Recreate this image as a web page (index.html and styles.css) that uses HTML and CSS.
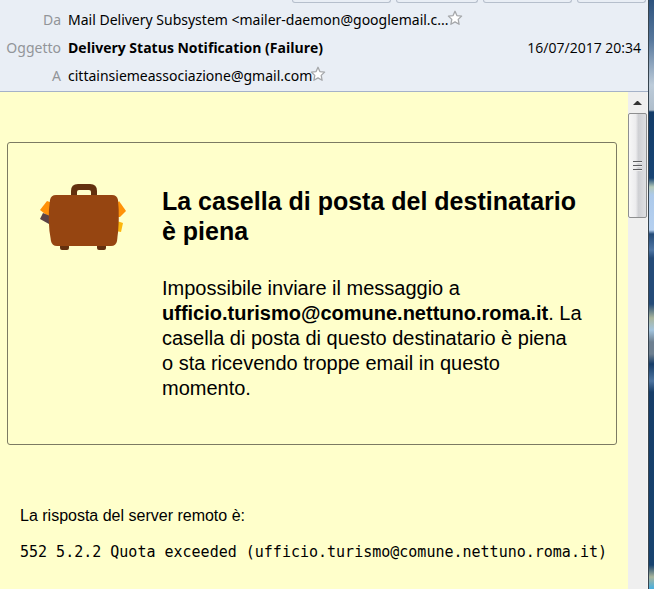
FILE: index.html
```
<!DOCTYPE html>
<html lang="it">
<head>
    <title>Delivery Status Notification (Failure)</title>
    <meta charset="utf-8" />
    <link rel="stylesheet" href="styles.css">
</head>
<body>
    <div id="window">
        <div id="mail">
            <header id="headers">
                <div class="toolbar">
                    <span class="tool tool1"></span>
                    <span class="tool tool2"></span>
                    <span class="tool tool3"></span>
                    <span class="tool tool4"></span>
                </div>
                <div class="row">
                    <span class="label">Da</span>
                    <span class="value">Mail Delivery Subsystem &lt;mailer-daemon@googlemail.c...</span>
                    <svg class="star" viewBox="0 0 16 16"><path d="M8 1.3 L9.9 5.6 L14.6 6.1 L11.2 9.4 L12.1 14.3 L8 11.9 L3.9 14.3 L4.8 9.4 L1.4 6.1 L6.1 5.6 Z"/></svg>
                </div>
                <div class="row">
                    <span class="label">Oggetto</span>
                    <strong class="subject">Delivery Status Notification (Failure)</strong>
                    <span class="date">16/07/2017 20:34</span>
                </div>
                <div class="row">
                    <span class="label">A</span>
                    <span class="value">cittainsiemeassociazione@gmail.com</span>
                    <svg class="star" viewBox="0 0 16 16"><path d="M8 1.3 L9.9 5.6 L14.6 6.1 L11.2 9.4 L12.1 14.3 L8 11.9 L3.9 14.3 L4.8 9.4 L1.4 6.1 L6.1 5.6 Z"/></svg>
                </div>
            </header>
            <div id="content">
                <main id="message">
                    <section class="notice">
                        <svg class="suitcase" viewBox="0 0 88 70">
                            <path fill="#ff9108" d="M7 18 L18 22 L18 35 L9 34 L0 27 Z"/>
                            <path fill="#5b4346" d="M3 30 L17 36 L18 43 L9 41 L0 36 Z"/>
                            <path fill="#ff9108" d="M79 18 L86 28 L80 34 L76 34 L76 22 Z"/>
                            <path fill="#fdb60c" d="M77 38 L83 40 L81 49 L76 48 Z"/>
                            <path fill="#63300f" d="M31 14 V8 Q31 1 38 1 H50 Q57 1 57 8 V14 H51 V9 Q51 7 49 7 H39 Q37 7 37 9 V14 Z"/>
                            <path fill="#63300f" d="M20 62 H29 V65 Q29 67 27 67 H22 Q20 67 20 65 Z M57 62 H66 V65 Q66 67 64 67 H59 Q57 67 57 65 Z"/>
                            <path fill="#964511" d="M16 12 H72 Q77 12 78 17 Q80 37 77 58 Q76 63 71 63 H17 Q12 63 11 58 Q7 37 10 17 Q11 12 16 12 Z"/>
                        </svg>
                        <div class="text">
                            <h1>La casella di posta del destinatario è piena</h1>
                            <p>Impossibile inviare il messaggio a <b>ufficio.turismo@comune.nettuno.roma.it</b>. La casella di posta di questo destinatario è piena o sta ricevendo troppe email in questo momento.</p>
                        </div>
                    </section>
                    <section class="response">
                        <p>La risposta del server remoto è:</p>
                        <p class="code">552 5.2.2 Quota exceeded (ufficio.turismo@comune.nettuno.roma.it)</p>
                    </section>
                </main>
                <div id="scrollbar">
                    <svg class="up" viewBox="0 0 20 21"><path d="M5 13 L9 9 L10 9 L14 13 Z"/></svg>
                    <div class="thumb"><i></i><i></i><i></i></div>
                </div>
            </div>
        </div>
        <div id="desktop"></div>
    </div>
</body>
</html>
```

FILE: styles.css
```
* { box-sizing: border-box; }
body { margin: 0; background-color: #fff; color: #000; font-family: "Liberation Sans", Arial, sans-serif; }
h1, p { margin: 0; padding: 0; }

#window { display: flex; min-height: 100vh; }
#mail { flex: 1; min-width: 0; display: flex; flex-direction: column; }
#desktop { width: 7px; border-left: 1px solid #36434e; border-right: 1px solid #fff;
    background: linear-gradient(#2d527d 0, #56779c 40px, #bccbd9 85px, #aebdcb 110px, #123b68 112px, #174474 178px, #b4c9b9 187px, #acc9ea 195px, #b5d0f0 230px, #244b78 234px, #4f76a4 250px, #244b78 258px, #244b78 304px, #a9b59c 318px, #a3c4de 330px, #6d7f90 342px, #6d7f90 354px, #163d68 364px, #4d74a0 381px, #163d68 392px, #17436f 565px, #a9b59c 577px, #46aee0 589px); }

#headers { background-color: #e9eef5; border-bottom: 1px solid #a5b2c8; padding-bottom: 1px; font-family: "Noto Sans", "Segoe UI", sans-serif; font-size: 14px; line-height: 28px; }
.toolbar { display: flex; justify-content: flex-end; gap: 5px; height: 6px; padding-right: 2px; }
.tool { height: 3px; border: 1px solid #b6bfcc; border-top: 0; border-radius: 0 0 3px 3px; }
.tool1 { width: 99px; }
.tool2 { width: 82px; }
.tool3 { width: 89px; }
.tool4 { width: 69px; }
.row { display: flex; align-items: center; padding-right: 7px; white-space: nowrap; }
.label { width: 61px; margin-right: 7px; text-align: right; color: #929599; }
.subject, .date { font-family: "Open Sans", "Segoe UI", sans-serif; }
.date { margin-left: auto; }
.star { width: 16px; height: 16px; margin: -4px 0 0 -2px; fill: #fff; stroke: #a5a7aa; stroke-width: 1.3; stroke-linejoin: round; }

#content { flex: 1; display: flex; }
#message { flex: 1; min-width: 0; padding: 50px 11px 24px 7px; background-color: #ffffcb; }
.notice { display: flex; align-items: flex-start; gap: 34px; padding: 43px 34px 43px 32px; border: 1px solid #7c7b63; border-radius: 3px; }
.suitcase { flex: none; width: 88px; height: 70px; margin-top: -3px; }
.text { flex: 1; min-width: 0; }
h1 { font-size: 25px; line-height: 30px; margin-bottom: 30px; }
.text p { font-size: 20px; line-height: 25px; }
.response { padding: 58px 0 0 13px; font-size: 16px; line-height: 26px; }
.code { margin-top: 10px; font-family: "DejaVu Sans Mono", Consolas, monospace; font-size: 15px; white-space: nowrap; }

#scrollbar { width: 20px; background-color: #efefef; border-right: 1px solid #f6f6f6; }
.up { display: block; width: 20px; height: 21px; fill: #333; }
.thumb { display: flex; flex-direction: column; align-items: center; justify-content: center; gap: 2px; width: 19px; height: 105px; border: 1px solid #8e8f90; border-radius: 2px; background: linear-gradient(to right, #f7f7f7, #ececee 40%, #cfd0d4 55%, #dedfe2); }
.thumb i { width: 9px; height: 2px; background-color: #5c5d60; border-bottom: 1px solid #eee; }
```
